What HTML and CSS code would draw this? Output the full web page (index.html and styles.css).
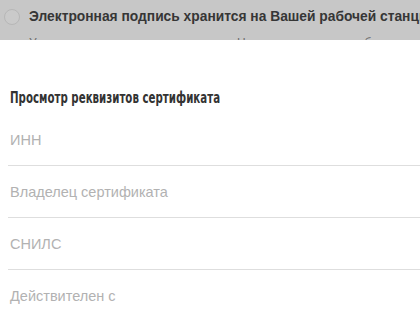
FILE: index.html
```html
<!DOCTYPE html>
<html lang="ru">
<head>
<meta charset="utf-8">
<link rel="stylesheet" href="styles.css">
</head>
<body>
<div class="backdrop">
  <div class="option">
    <span class="radio"></span>
    <div class="option-text">
      <div class="option-title">Электронная подпись хранится на Вашей рабочей станции</div>
      <div class="option-sub">Устанавливается на ваш компьютер. Не поддерживается работа на мобильных устройствах</div>
    </div>
  </div>
</div>
<div class="modal">
  <h2 class="modal-title"><span class="modal-title-text">Просмотр реквизитов сертификата</span></h2>
  <div class="fields">
    <div class="field">ИНН</div>
    <div class="field">Владелец сертификата</div>
    <div class="field">СНИЛС</div>
    <div class="field">Действителен с</div>
  </div>
</div>
</body>
</html>
```
FILE: styles.css
```css
html, body {
  margin: 0;
  padding: 0;
  background: #ffffff;
  overflow: hidden;
}
body {
  width: 420px;
  height: 315px;
  font-family: "Liberation Sans", Arial, sans-serif;
}
.backdrop {
  height: 40px;
  background: #c7c7c7;
  overflow: hidden;
}
.option {
  display: flex;
  align-items: flex-start;
  padding: 8px 0 0 4px;
}
.radio {
  flex: none;
  width: 14px;
  height: 14px;
  border: 1px solid #b7b7b7;
  border-radius: 50%;
  background: #cacaca;
  margin-top: 1px;
  margin-right: 9px;
}
.option-text {
  white-space: nowrap;
}
.option-title {
  font-weight: bold;
  font-size: 13.8px;
  line-height: 18px;
  color: #363636;
}
.option-sub {
  margin-top: 10px;
  font-size: 12px;
  line-height: 14px;
  color: #6c6c6c;
}
.modal {
  padding: 0 0 0 8px;
}
.modal-title {
  margin: 0;
  padding: 49px 0 0 2px;
  height: 25px;
  font-family: "DejaVu Sans Condensed", "DejaVu Sans", sans-serif;
  font-weight: bold;
  font-size: 15px;
  line-height: 18px;
  color: #333333;
  white-space: nowrap;
}
.modal-title-text {
  display: inline-block;
  transform: scaleX(0.76);
  transform-origin: left center;
}
.fields {
  display: flex;
  flex-direction: column;
}
.field {
  height: 51px;
  display: flex;
  align-items: center;
  padding-left: 2px;
  border-bottom: 1px solid #dedede;
  font-size: 14.5px;
  color: #b2b2b2;
}
.field:last-child {
  border-bottom: none;
}
```
